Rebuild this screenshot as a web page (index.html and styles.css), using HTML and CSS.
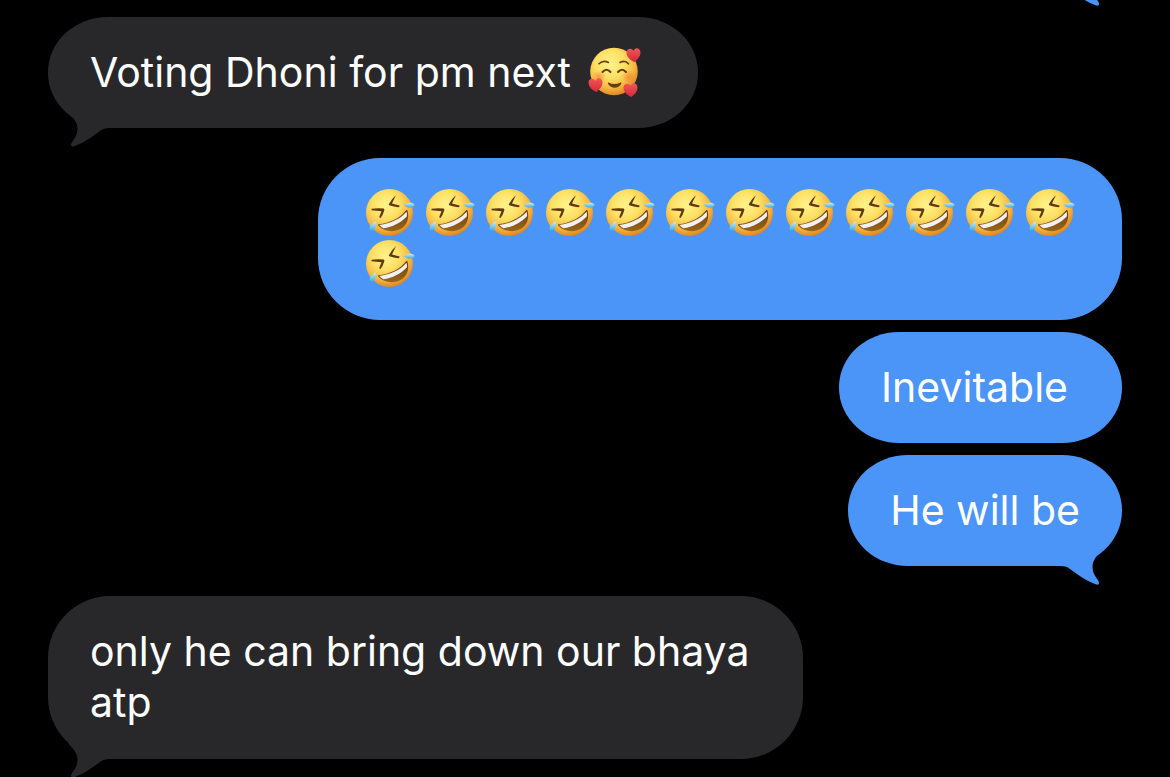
FILE: index.html
```html
<!DOCTYPE html>
<html lang="en">
<head>
  <meta charset="UTF-8" />
  <meta name="viewport" content="width=device-width, initial-scale=1.0"/>
  <title>Messages</title>
  <link rel="stylesheet" href="styles.css">
</head>
<body>

  <!-- Shared shapes -->
  <svg class="defs" aria-hidden="true">
    <defs>
      <radialGradient id="skin" cx="0.42" cy="0.34" r="0.68">
        <stop offset="0" stop-color="#fff38c"/>
        <stop offset="0.45" stop-color="#fddf62"/>
        <stop offset="0.75" stop-color="#f5b742"/>
        <stop offset="1" stop-color="#dd8220"/>
      </radialGradient>
      <radialGradient id="blush">
        <stop offset="0" stop-color="#f07a30" stop-opacity="0.65"/>
        <stop offset="1" stop-color="#f07a30" stop-opacity="0"/>
      </radialGradient>
      <linearGradient id="tear" x1="0" y1="0" x2="0" y2="1">
        <stop offset="0" stop-color="#c4eefc"/>
        <stop offset="1" stop-color="#3fa9de"/>
      </linearGradient>
      <linearGradient id="mouth" x1="0" y1="0" x2="0" y2="1">
        <stop offset="0" stop-color="#6b3f0e"/>
        <stop offset="1" stop-color="#9a661c"/>
      </linearGradient>
      <linearGradient id="red" x1="0" y1="0" x2="0" y2="1">
        <stop offset="0" stop-color="#f45655"/>
        <stop offset="1" stop-color="#d02a39"/>
      </linearGradient>
    </defs>
    <symbol id="tail" viewBox="0 0 46 38">
      <path d="M2 2C8 9 13 13 11 23C10 28 5 32 5 35Q5 38 9 36C20 32 28 25 34 21Q37 18 44 18L44 0Z"/>
    </symbol>
    <symbol id="heart" viewBox="0 0 16 15">
      <path fill="url(#red)" d="M9 15C4 13 .6 9 .5 5C.5 2 2.500 .8 4.500 .8C6.300 .8 7.500 1.800 8 3.200C8.500 1.300 9.700 .3 11.500 .3C13.800 .3 15.500 2 15.500 5C15.400 9 12.500 12 9 15Z"/>
    </symbol>
    <symbol id="rofl" viewBox="0 0 50 50">
      <circle cx="24.500" cy="24.500" r="23.500" fill="url(#skin)"/>
      <g fill="#5f390c">
        <path d="M31 7L27 15.600L34.500 17.500Q34.800 19 33.500 19.300Q28.500 18.800 24.300 17.300Q23.600 16.700 24 16Q27.500 10 31 7Z"/>
        <path d="M6.500 20.800Q12.500 20 18.600 20.600Q19.800 21 19.300 22.300Q18 27 15.500 30Q14.300 30 14.300 28.800L16.500 23.200Q11.500 23 6.500 22.300Z"/>
      </g>
      <path fill="url(#mouth)" d="M13 36.300C25 35 35.500 30 41.300 22Q42.300 21.600 42.600 22.800C44.300 30 42.500 37 36 40.800C28.500 45 18.500 43.500 13 37.500Z"/>
      <path fill="#f1f0f2" d="M14.500 37C25.500 35.500 35.500 31 41.500 23.800Q42.500 26.500 41.800 28.500C35.500 35 27.500 39 18.500 40.300Q16 39 14.500 37Z"/>
      <path fill="url(#tear)" d="M38.500 17.300C42 14.300 47.500 13.800 49.500 16.500C49.500 19.800 43.500 21 38.500 17.300Z"/>
      <path fill="url(#tear)" d="M10.800 33.500C12 38 9.500 43.500 6 42.800C2.800 41.500 5 36 10.800 33.500Z"/>
    </symbol>
    <symbol id="smiling-hearts" viewBox="0 0 53 50">
      <circle cx="26" cy="24.500" r="23.800" fill="url(#skin)"/>
      <circle cx="11" cy="30" r="7" fill="url(#blush)"/>
      <circle cx="41" cy="30" r="7" fill="url(#blush)"/>
      <g fill="none" stroke="#6a3d0e" stroke-width="2" stroke-linecap="round">
        <path stroke-width="1.600" d="M11 16.800Q15 12.800 20.500 15.500"/>
        <path stroke-width="1.600" d="M32 15.500Q37 12.800 40.500 16.800"/>
        <path d="M14.500 25Q18.500 20.500 22.500 25"/>
        <path d="M30 25Q34 20.500 38 25"/>
      </g>
      <path fill="#6a3d0e" d="M20.500 35.500Q26.500 38.500 32.500 35.500Q33.800 35.300 33.200 36.800C30.500 42 23 42 20 36.800Q19.600 35.300 20.500 35.500Z"/>
      <use href="#heart" x="38" y="1" width="15" height="14"/>
      <use href="#heart" x="0" y="31" width="15" height="14"/>
      <use href="#heart" x="35" y="36" width="15" height="14"/>
    </symbol>
  </svg>

  <main class="thread">
    <!-- Tail of the sent message scrolled off the top -->
    <svg class="tail tail-above" aria-hidden="true"><use href="#tail"/></svg>

    <div class="message received last">
      <p class="text spaced">Voting Dhoni for pm next <svg class="emoji wide" role="img" aria-label="smiling face with hearts"><use href="#smiling-hearts"/></svg></p>
      <svg class="tail" aria-hidden="true"><use href="#tail"/></svg>
    </div>

    <div class="message sent tall">
      <p class="text emojis" role="img" aria-label="rolling on the floor laughing">
        <svg class="emoji"><use href="#rofl"/></svg>
        <svg class="emoji"><use href="#rofl"/></svg>
        <svg class="emoji"><use href="#rofl"/></svg>
        <svg class="emoji"><use href="#rofl"/></svg>
        <svg class="emoji"><use href="#rofl"/></svg>
        <svg class="emoji"><use href="#rofl"/></svg>
        <svg class="emoji"><use href="#rofl"/></svg>
        <svg class="emoji"><use href="#rofl"/></svg>
        <svg class="emoji"><use href="#rofl"/></svg>
        <svg class="emoji"><use href="#rofl"/></svg>
        <svg class="emoji"><use href="#rofl"/></svg>
        <svg class="emoji"><use href="#rofl"/></svg>
        <svg class="emoji"><use href="#rofl"/></svg>
      </p>
    </div>

    <div class="message sent">
      <p class="text spaced">Inevitable</p>
    </div>

    <div class="message sent last">
      <p class="text">He will be</p>
      <svg class="tail" aria-hidden="true"><use href="#tail"/></svg>
    </div>

    <div class="message received tall last">
      <p class="text spaced">only he can bring down our bhaya<br>atp</p>
      <svg class="tail" aria-hidden="true"><use href="#tail"/></svg>
    </div>
  </main>

</body>
</html>
```
FILE: styles.css
```css
body {
  margin: 0;
  background: #000;
  color: #fff;
  font-family: Inter, "Liberation Sans", sans-serif;
  font-size: 41px;
  line-height: 51px;
  overflow: hidden;
}
.defs {
  position: absolute;
  width: 0;
  height: 0;
}
.thread {
  position: relative;
  display: flex;
  flex-direction: column;
  padding: 17px 48px 0;
}
.message {
  position: relative;
  max-width: 804px;
  margin-bottom: 12px;
  border-radius: 60px / 55px;
}
.message.tall {
  border-radius: 62px;
}
.message.last {
  margin-bottom: 30px;
}
.received {
  align-self: flex-start;
  background: #28282a;
}
.sent {
  align-self: flex-end;
  background: #4b94f8;
}
.text {
  margin: 0;
  padding: 30px 42px;
}
.tall .text {
  padding-bottom: 31px;
}
.text.spaced {
  padding-right: 54px;
}
.emojis {
  display: flex;
  flex-wrap: wrap;
  row-gap: 1px;
}
.emoji {
  width: 50px;
  height: 50px;
  margin: 0 5px;
  vertical-align: top;
}
.emoji.wide {
  width: 53px;
  margin: 0 3px 0 5px;
}

/* Tails hang below the bubble, mirrored on sent messages */
.tail {
  position: absolute;
  width: 46px;
  height: 38px;
  bottom: -20px;
  left: 18px;
  fill: #28282a;
}
.sent .tail,
.tail-above {
  left: auto;
  right: 18px;
  fill: #4b94f8;
  transform: scaleX(-1);
}
.tail-above {
  top: -31px;
  right: 66px;
  bottom: auto;
}
```
